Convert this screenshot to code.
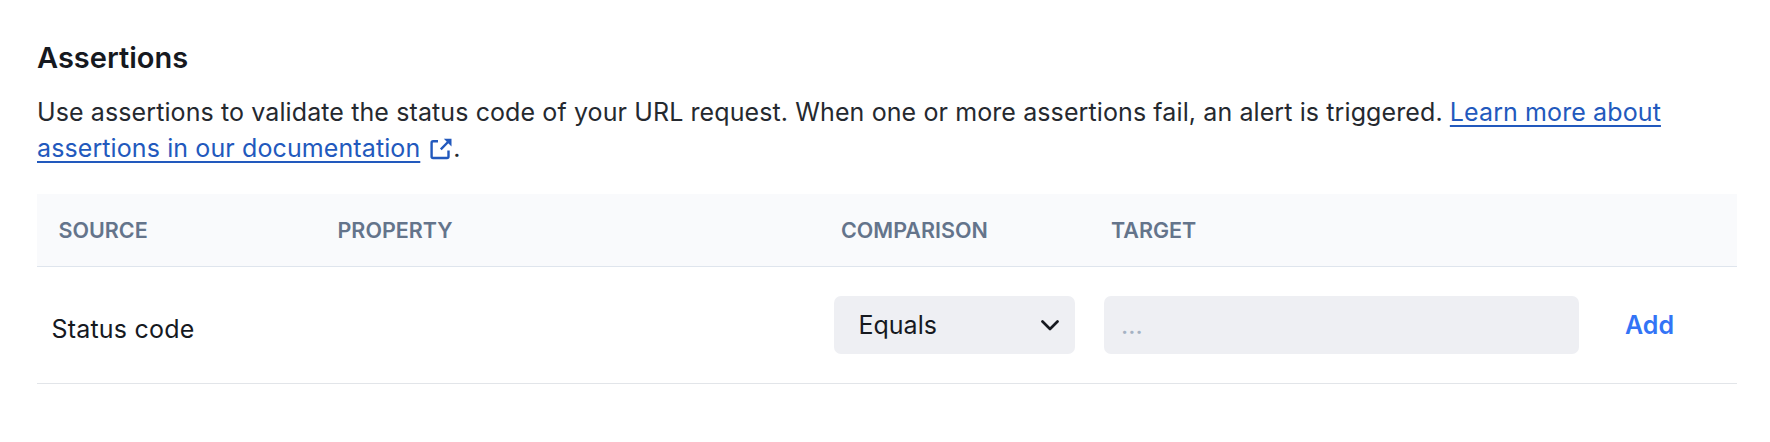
<section class="panel">
  <h2>Assertions</h2>
  <p>Use assertions to validate the status code of your URL request. When one or more assertions fail, an alert is triggered. <a href="#docs">Learn more about<br />assertions in our documentation</a><svg class="ext" viewBox="0 0 24 24" width="24" height="24"><path d="M9 3.300H4.100Q2.600 3.300 2.600 4.800V18.500Q2.600 20 4.100 20H18Q19.500 20 19.500 18.500V12.500M11.800 11.300L20 3" fill="none" stroke="currentColor" stroke-width="2.400" /><path d="M14.800 .7H22.500V8.400Z" fill="currentColor" /></svg>.</p>
  <div class="table">
    <div class="row head"><span>SOURCE</span><span>PROPERTY</span><span>COMPARISON</span><span>TARGET</span></div>
    <div class="row body">
      <span class="source">Status code</span><span></span>
      <button class="select">Equals<svg viewBox="0 0 18 11" width="18" height="11" fill="none" stroke="currentColor" stroke-width="2.700" stroke-linecap="round" stroke-linejoin="round"><path d="M1.500 1.500L9 9L16.500 1.500" /></svg></button>
      <input placeholder="..." aria-label="Target" />
      <button class="add">Add</button>
    </div>
  </div>
</section>

<style>
  :global(body) { background: #fff; }
  .panel { box-sizing: border-box; height: 442px; padding: 38px 33px 0 37px; font-family: Inter, sans-serif; color: #16191f; }
  h2 { margin: 0; font-size: 29px; line-height: 40px; font-weight: 600; }
  p { margin: 16px 0 28px; font-size: 25px; line-height: 36px; letter-spacing: .105px; white-space: nowrap; color: #25292f; }
  a { color: #2259bd; text-decoration: underline; text-underline-offset: 4px; text-decoration-thickness: 2px; text-decoration-skip-ink: none; }
  .ext { color: #2259bd; margin-left: 9px; vertical-align: -4.500px; }
  .row { display: grid; grid-template-columns: 279px 518px 270px 507px 1fr; border-bottom: 1px solid #e2e5e9; }
  .head { height: 72px; align-items: center; background: #f9fafc; border-color: #dfe5ed; color: #64748b; font-size: 21.500px; font-weight: 600; }
  .head span:nth-child(-n + 2) { padding-left: 21.500px; }
  .head span:nth-child(n + 3) { padding-left: 7px; }
  .body { height: 116px; align-items: center; font-size: 25px; }
  .source { padding: 8px 0 0 14.500px; letter-spacing: .2px; }
  button, input { box-sizing: border-box; font: inherit; color: inherit; border: 0; }
  .select { display: flex; justify-content: space-between; align-items: center; width: 241px; height: 58px; padding: 0 16px 0 24.500px; border-radius: 7px; background: #eeeff3; }
  input { width: 475px; height: 58px; padding: 0 17px; border-radius: 7px; background: #eeeff3; }
  input::placeholder { color: #a5b2c3; opacity: 1; }
  .add { padding: 0 0 0 14px; background: none; color: #3374f6; font-weight: 600; text-align: left; }
</style>
